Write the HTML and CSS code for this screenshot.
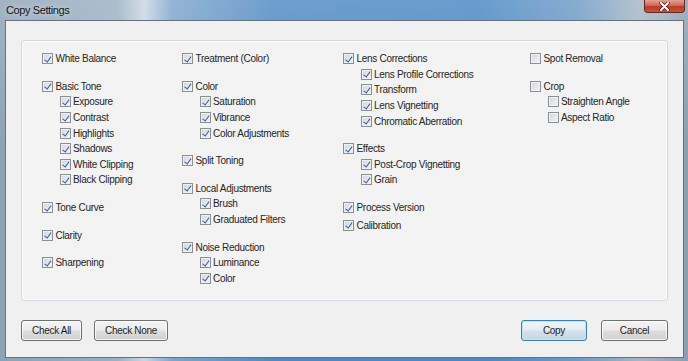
FILE: index.html
```html
<!DOCTYPE html>
<html lang="en">
<head>
  <meta charset="UTF-8" />
  <title>Copy Settings</title>
  <link rel="stylesheet" href="styles.css">
</head>
<body>

<div class="window">
  <!-- Barra de título -->
  <div class="titlebar">
    <span class="title">Copy Settings</span>
    <div class="btn-fechar">
      <svg width="15" height="9" viewBox="0 0 15 9">
        <path d="M4 1 L11 8 M11 1 L4 8" stroke="#5a1a14" stroke-width="3.4" stroke-linecap="round"/>
        <path d="M4 1 L11 8 M11 1 L4 8" stroke="#fff" stroke-width="1.9" stroke-linecap="round"/>
      </svg>
    </div>
  </div>

  <div class="cliente">
    <!-- Painel com as opções -->
    <div class="painel">
      <div class="coluna">
        <div class="grupo">
          <label class="item"><span class="cb on"></span>White Balance</label>
        </div>
        <div class="grupo">
          <label class="item"><span class="cb on"></span>Basic Tone</label>
          <label class="item sub"><span class="cb on"></span>Exposure</label>
          <label class="item sub"><span class="cb on"></span>Contrast</label>
          <label class="item sub"><span class="cb on"></span>Highlights</label>
          <label class="item sub"><span class="cb on"></span>Shadows</label>
          <label class="item sub"><span class="cb on"></span>White Clipping</label>
          <label class="item sub"><span class="cb on"></span>Black Clipping</label>
        </div>
        <div class="grupo">
          <label class="item"><span class="cb on"></span>Tone Curve</label>
        </div>
        <div class="grupo">
          <label class="item"><span class="cb on"></span>Clarity</label>
        </div>
        <div class="grupo">
          <label class="item"><span class="cb on"></span>Sharpening</label>
        </div>
      </div>

      <div class="coluna">
        <div class="grupo">
          <label class="item"><span class="cb on"></span>Treatment (Color)</label>
        </div>
        <div class="grupo">
          <label class="item"><span class="cb on"></span>Color</label>
          <label class="item sub"><span class="cb on"></span>Saturation</label>
          <label class="item sub"><span class="cb on"></span>Vibrance</label>
          <label class="item sub"><span class="cb on"></span>Color Adjustments</label>
        </div>
        <div class="grupo">
          <label class="item"><span class="cb on"></span>Split Toning</label>
        </div>
        <div class="grupo">
          <label class="item"><span class="cb on"></span>Local Adjustments</label>
          <label class="item sub"><span class="cb on"></span>Brush</label>
          <label class="item sub"><span class="cb on"></span>Graduated Filters</label>
        </div>
        <div class="grupo">
          <label class="item"><span class="cb on"></span>Noise Reduction</label>
          <label class="item sub"><span class="cb on"></span>Luminance</label>
          <label class="item sub"><span class="cb on"></span>Color</label>
        </div>
      </div>

      <div class="coluna">
        <div class="grupo">
          <label class="item"><span class="cb on"></span>Lens Corrections</label>
          <label class="item sub"><span class="cb on"></span>Lens Profile Corrections</label>
          <label class="item sub"><span class="cb on"></span>Transform</label>
          <label class="item sub"><span class="cb on"></span>Lens Vignetting</label>
          <label class="item sub"><span class="cb on"></span>Chromatic Aberration</label>
        </div>
        <div class="grupo">
          <label class="item"><span class="cb on"></span>Effects</label>
          <label class="item sub"><span class="cb on"></span>Post-Crop Vignetting</label>
          <label class="item sub"><span class="cb on"></span>Grain</label>
        </div>
        <div class="grupo">
          <label class="item"><span class="cb on"></span>Process Version</label>
        </div>
        <div class="grupo grupo-junto">
          <label class="item"><span class="cb on"></span>Calibration</label>
        </div>
      </div>

      <div class="coluna">
        <div class="grupo">
          <label class="item"><span class="cb"></span>Spot Removal</label>
        </div>
        <div class="grupo">
          <label class="item"><span class="cb"></span>Crop</label>
          <label class="item sub"><span class="cb"></span>Straighten Angle</label>
          <label class="item sub"><span class="cb"></span>Aspect Ratio</label>
        </div>
      </div>
    </div>

    <!-- Botões de baixo -->
    <div class="botoes">
      <div class="botoes-grupo">
        <button class="btn">Check All</button>
        <button class="btn">Check None</button>
      </div>
      <div class="botoes-grupo botoes-direita">
        <button class="btn btn-padrao btn-largo">Copy</button>
        <button class="btn btn-largo">Cancel</button>
      </div>
    </div>
  </div>
</div>

</body>
</html>
```

FILE: styles.css
```css
/* Reset básico */
* {
  margin: 0;
  padding: 0;
  box-sizing: border-box;
}

body {
  width: 688px;
  height: 361px;
  overflow: hidden;
  font-family: 'Liberation Sans', Arial, sans-serif;
}

/* Moldura "vidro" da janela */
.window {
  width: 688px;
  height: 361px;
  display: flex;
  flex-direction: column;
  padding: 0 4px 3px 5px;
  background:
    linear-gradient(rgba(255,255,255,0.18), rgba(255,255,255,0) 40%),
    linear-gradient(90deg, #8ea2b6 0%, #9cb0c3 17%, #c9d6e2 21%, #7ea5cb 25%, #4f89c3 40%, #4a87c3 70%, #6d9bc6 84%, #a7b6c4 93%, #8d9eaf 100%);
}

.titlebar {
  position: relative;
  height: 20px;
  padding-left: 3px;
  display: flex;
  align-items: center;
}

.title {
  font-size: 11px;
  letter-spacing: -0.4px;
  color: #151515;
  text-shadow: 0 0 6px rgba(255,255,255,0.8);
  margin-left: -2px;
}

.btn-fechar {
  position: absolute;
  top: 0;
  right: -1px;
  width: 41px;
  height: 13px;
  border: 1px solid #5e2a24;
  border-top: none;
  border-radius: 0 0 4px 4px;
  background: linear-gradient(#e2a294 0%, #cf6a58 45%, #bb3a25 55%, #c8553c 100%);
  display: flex;
  align-items: center;
  justify-content: center;
}

/* Área cliente */
.cliente {
  flex: 1;
  background: #f0f0f0;
  border: 1px solid #66727f;
  padding: 19px 15px 0 15px;
}

.painel {
  height: 261px;
  border: 1px solid #d5d8db;
  border-radius: 3px;
  background: #f3f3f3;
  box-shadow: inset 0 0 0 1px #fbfbfb;
  padding: 10px 0 0 20px;
  display: grid;
  grid-template-columns: 140px 161px 187px 1fr;
  align-items: start;
}

.grupo + .grupo {
  margin-top: 12px;
}

.grupo-junto.grupo {
  margin-top: 2px;
}

.item {
  display: flex;
  align-items: center;
  height: 15.6px;
  font-size: 10px;
  letter-spacing: -0.3px;
  color: #262626;
  white-space: nowrap;
}

.item.sub {
  padding-left: 17.5px;
}

/* Caixa de seleção estilo Windows 7 */
.cb {
  position: relative;
  flex: none;
  width: 11px;
  height: 11px;
  margin-right: 2.5px;
  border: 1px solid #8e8f8f;
  background: linear-gradient(135deg, #cfd6e0, #f4f6f8);
  box-shadow: inset 0 0 0 1px #eef0f3;
}

.cb.on::after {
  content: "";
  position: absolute;
  left: 3.2px;
  top: 0.5px;
  width: 2.6px;
  height: 5.6px;
  border: solid #3a5cae;
  border-width: 0 1.6px 1.6px 0;
  transform: rotate(36deg);
}

/* Botões */
.botoes {
  display: flex;
  justify-content: space-between;
  margin-top: 19px;
}

.botoes-grupo {
  display: flex;
  gap: 12px;
}

.botoes-direita {
  gap: 14px;
}

.btn {
  height: 21px;
  padding: 0 10px;
  font-family: 'Liberation Sans', Arial, sans-serif;
  font-size: 10px;
  letter-spacing: -0.3px;
  color: #1e1e1e;
  border: 1px solid #707070;
  border-radius: 3px;
  background: linear-gradient(#f3f3f3 0%, #ececec 48%, #dedede 52%, #d0d0d0 100%);
  box-shadow: inset 0 0 0 1px rgba(255,255,255,0.75);
}

.btn-largo {
  width: 66px;
}

.btn-largo + .btn-largo {
  width: 67px;
}

.btn-padrao {
  border-color: #3c7fb1;
  background: linear-gradient(#eef5fa 0%, #e3edf4 48%, #d3e1eb 52%, #c7d7e3 100%);
  box-shadow: inset 0 0 0 1px #bfe2f6;
}
```
